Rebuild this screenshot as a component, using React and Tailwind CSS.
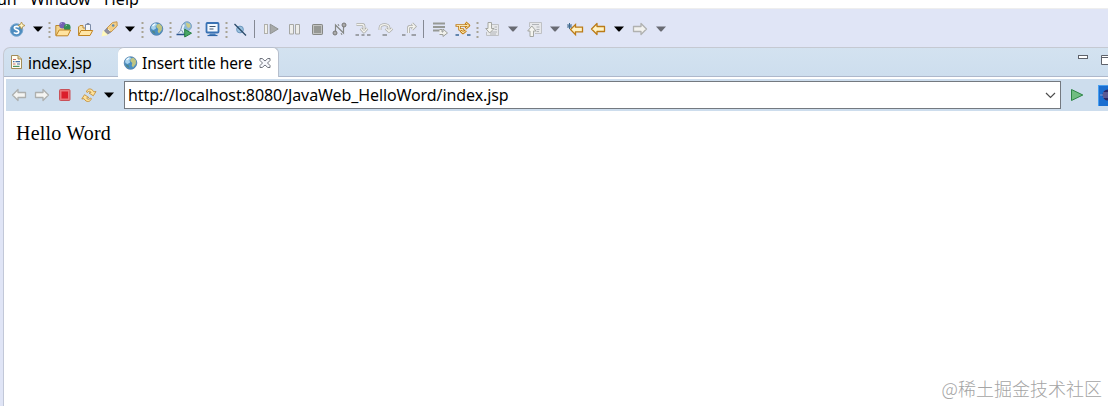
import React from 'react';
import clsx from 'clsx';

const Icon = ({ className, children }) => (
  <svg viewBox="0 0 16 16" className={clsx('h-4 w-4 shrink-0 overflow-visible', className)} fill="none">
    {children}
  </svg>
);

const Caret = ({ className, color = '#000' }) => (
  <svg viewBox="0 0 10 6" className={clsx('h-[6px] w-[10px] shrink-0', className)}>
    <path d="M0 0.5H10L5.5 5.5H4.5Z" fill={color} />
  </svg>
);

const Dots = ({ className }) => (
  <svg viewBox="0 0 3 17" className={clsx('h-[17px] w-[3px] shrink-0', className)}>
    {[1, 6, 10, 15].map(y => (
      <rect key={y} x="0.5" y={y} width="2" height="2" fill="#a8a394" />
    ))}
  </svg>
);

const Divider = ({ className }) => (
  <div className={clsx('h-[18px] w-px shrink-0 bg-[#858994]', className)} />
);

const LeftArrow = ({ stroke, fill }) => (
  <path d="M1.5 8L7 2.5V5.5H14.5V10.5H7V13.5Z" stroke={stroke} fill={fill} strokeWidth="1.3" strokeLinejoin="round" />
);

const RightArrow = ({ stroke, fill }) => (
  <path d="M14.5 8L9 2.5V5.5H1.5V10.5H9V13.5Z" stroke={stroke} fill={fill} strokeWidth="1.3" strokeLinejoin="round" />
);

const Globe = () => (
  <>
    <circle cx="7.5" cy="8" r="6.3" fill="#4a8fc4" stroke="#5580a8" strokeWidth="0.8" />
    <path d="M2 6L4 3L7 2L8.5 4L6.5 5L7 7.5L4.5 9L2.5 8Z" fill="#a9d3ee" />
    <path d="M8 3.5L10.5 2.8L13 5.5L12.8 9L10 12.5L8.7 10.5L9.3 8L7.2 6Z" fill="#c0c583" />
    <path d="M2.5 9.5L5.5 10L6.5 13L4 12Z" fill="#4f868a" />
    <path d="M3.5 5L6 3" stroke="#f2fbff" strokeWidth="1.4" />
  </>
);

const Toolbar = () => (
  <div className="flex h-[38px] items-center bg-[#e0e5f6] pt-[2px]">
    <Icon className="ml-[9px]">
      <circle cx="7.5" cy="9" r="6.3" fill="#4d8cc0" stroke="#7ba9d0" />
      <path d="M10 6.2C8.7 5 5.2 5.1 5.3 7C5.4 9 9.8 8.3 9.8 10.7C9.8 12.7 6.2 12.9 4.8 11.5" stroke="#fff" strokeWidth="1.7" />
      <path d="M12.5 1L13.7 3.5L16 4.5L13.7 5.6L12.5 8.2L11.3 5.6L9 4.5L11.3 3.5Z" fill="#fff4c4" stroke="#ae8b3c" strokeWidth="0.8" />
    </Icon>
    <Caret className="ml-[8px]" />
    <Dots className="ml-[5px]" />
    <Icon className="ml-[4px]">
      <path d="M0.8 14.5V4.5H5L6 6H13V9" fill="#f4d48c" stroke="#b98830" />
      <circle cx="7.5" cy="4.2" r="3.2" fill="#7460b4" />
      <circle cx="12.2" cy="6.4" r="3.4" fill="#348b56" />
      <path d="M5.5 3L7 2" stroke="#b0a4dd" />
      <path d="M10.5 5L12 4.2" stroke="#8bd09b" />
      <path d="M1 14.8L4.2 9H15.6L12.8 14.8Z" fill="#ffe3a0" stroke="#c28422" />
    </Icon>
    <Icon className="ml-[6px]">
      <path d="M1.5 14V6L3 4.5H6V7H13V9" fill="#f8dfa0" stroke="#bd8b35" />
      <path d="M8.5 3.5H13.5V9.5H8.5Z" fill="#f4f7fc" stroke="#7d8ca7" />
      <path d="M10 3.5V2.5H12V3.5" stroke="#7d8ca7" />
      <path d="M1.5 14.5L4 9.5H15.7L13 14.5Z" fill="#ffe6a8" stroke="#c28422" />
    </Icon>
    <Icon className="ml-[8px]">
      <path d="M0.5 15.5L2 9L7.5 14Z" fill="#fff8bc" />
      <path d="M3.5 10L6 7L10 11L6.8 13Z" fill="#8f8f9a" stroke="#777783" strokeWidth="0.7" />
      <path d="M6 7L11.5 1.5L16 0.8L16.2 5L10 11Z" fill="#f3ce86" stroke="#c59853" />
      <circle cx="12.2" cy="4.5" r="1.3" fill="#5d8cb5" />
      <path d="M7 8L9.2 10" stroke="#fff1c2" />
    </Icon>
    <Caret className="ml-[8px]" />
    <Dots className="ml-[6px]" />
    <Icon className="ml-[5px]"><Globe /></Icon>
    <Dots className="ml-[4px]" />
    <Icon className="ml-[4px]">
      <circle cx="11" cy="5.2" r="4.5" fill="#8db9d9" stroke="#7098bd" strokeWidth="0.8" />
      <path d="M10 1.5L14 3L14.5 6L12 7L10.5 5Z" fill="#cacc88" />
      <path d="M3.5 13L5.5 8L6 4C6.5 2.8 8 2.5 9 3.5L7.5 7.5L9 12.5H5Z" fill="#e6f3fc" />
      <path d="M2 12.5L4.5 9.5L6 4.5C6.5 3 7.5 2.5 8.5 3M5.5 9L7.5 12.5" stroke="#7894b5" />
      <path d="M0.5 13.5H9" stroke="#2b548f" strokeWidth="1.5" />
      <path d="M8.7 8.3L15.5 12.2L8.7 16Z" fill="#48a666" stroke="#247e42" />
    </Icon>
    <Dots className="ml-[5px]" />
    <Icon className="ml-[5px]">
      <rect x="1.5" y="2" width="12" height="9.5" rx="0.8" fill="#f3f8fe" stroke="#3a72b4" strokeWidth="1.8" />
      <path d="M4.5 5.5H10.5M4.5 8H8.5" stroke="#40556f" strokeWidth="1.1" />
      <path d="M5 12.5H10L11.5 15H3.5Z" fill="#4c82bd" />
      <path d="M2.5 14.5H12.5" stroke="#2e65a7" strokeWidth="1.2" />
    </Icon>
    <Dots className="ml-[4px]" />
    <Icon className="ml-[5px]">
      <circle cx="7" cy="8.5" r="3.4" fill="#9ac1df" stroke="#6c97bd" />
      <path d="M1.5 3L13 14.5" stroke="#294867" strokeWidth="1.3" />
    </Icon>
    <Divider className="ml-[5px]" />

    <Icon className="ml-[8px]">
      <rect x="1.5" y="3.5" width="3" height="9" fill="#f0f0eb" stroke="#b0b0ac" />
      <path d="M7.2 3.2V12.8L15.2 8Z" fill="#a7a9a9" stroke="#8f9290" />
    </Icon>
    <Icon className="ml-[8px]">
      <path d="M2.5 3.5H6.5V13H2.5ZM8.5 3.5H12.5V13H8.5Z" fill="#ededeb" stroke="#a6a7a4" />
    </Icon>
    <Icon className="ml-[7px]">
      <rect x="2.5" y="3.5" width="10" height="10" rx="0.7" fill="#c2c3c1" stroke="#858784" />
      <rect x="4" y="5" width="7" height="7" fill="#969894" />
    </Icon>
    <Icon className="ml-[6px]">
      <path d="M3.5 12V4L11.5 12V4" stroke="#858885" strokeWidth="1.2" />
      <circle cx="3" cy="12" r="2" fill="#aaa" stroke="#777" />
      <circle cx="12" cy="4" r="2" fill="#aaa" stroke="#777" />
      <path d="M6 3L7 5M9 12L10 14" stroke="#858885" />
    </Icon>
    <Icon className="ml-[7px]">
      <path d="M1.5 3.5H7Q9 3.5 9 5.5V9M5.8 7.5L9 11L12.2 7.5" stroke="#a9aaa6" strokeWidth="2.8" strokeLinejoin="round" />
      <path d="M1.5 3.5H7Q9 3.5 9 5.5V9M5.8 7.5L9 11L12.2 7.5" stroke="#f3f3ef" strokeWidth="1.3" />
      <path d="M0.5 14H4M6.5 14H9.5M12 14H15.5" stroke="#888b8e" strokeWidth="1.5" />
    </Icon>
    <Icon className="ml-[7px]">
      <path d="M2 9V7C2 2.5 11 2.5 11 7V9M7.8 7.5L11 10.5L14.2 7.5" stroke="#a9aaa6" strokeWidth="2.8" strokeLinejoin="round" />
      <path d="M2 9V7C2 2.5 11 2.5 11 7V9M7.8 7.5L11 10.5L14.2 7.5" stroke="#f3f3ef" strokeWidth="1.3" />
      <path d="M4.5 14H9" stroke="#888b8e" strokeWidth="1.5" />
    </Icon>
    <Icon className="ml-[7px]">
      <path d="M7.5 12V7Q7.5 5.5 9 5.5H13M11 2.5L14 5.5L11 8.5" stroke="#a9aaa6" strokeWidth="2.8" />
      <path d="M7.5 12V7Q7.5 5.5 9 5.5H13M11 2.5L14 5.5L11 8.5" stroke="#f3f3ef" strokeWidth="1.3" />
      <path d="M1 14H4.5M10.5 14H15" stroke="#888b8e" strokeWidth="1.5" />
    </Icon>
    <Divider className="ml-[6px]" />
    <Icon className="ml-[8px]">
      <path d="M1 2.5H13M1 6H13M1 9.5H8" stroke="#969995" strokeWidth="1.8" />
      <path d="M7.5 8.5H10V11H11V8L15.5 12L11 15.5V13.5H7.5" fill="#f1f1ec" stroke="#9c9e99" />
    </Icon>
    <Icon className="ml-[7px]">
      <path d="M0.5 4.5H13M10.5 1.5L14 4.5L10.5 7.5M4.5 5V8.5H8V11M5.5 9.5L8 12L11 9.5" stroke="#c17c16" strokeWidth="2.6" strokeLinejoin="round" />
      <path d="M1.5 4.5H13M10.5 1.5L14 4.5L10.5 7.5M4.5 5V8.5H8V11M5.5 9.5L8 12L11 9.5" stroke="#fff0bb" strokeWidth="0.9" />
      <path d="M0.5 14H4M12 14H15.5" stroke="#386596" strokeWidth="1.6" />
    </Icon>
    <Dots className="ml-[5px]" />
    <Icon className="ml-[6px]">
      <path d="M6.5 3.5H13.5V14.5H1.5V11" fill="#e7e8ea" stroke="#bfc1c5" />
      <path d="M9.5 6H12M9.5 8.5H12M5.5 11H12M5 13H11" stroke="#b1b4b8" />
      <path d="M3 1.5H6.5V7.5H9L4.7 12L0.7 7.5H3Z" fill="#f4f4ef" stroke="#a4a6a2" />
    </Icon>
    <Caret className="ml-[7px]" color="#696b73" />
    <Icon className="ml-[9px]">
      <path d="M2.5 6V1.5H14.5V12.5H8" fill="#e7e8ea" stroke="#bfc1c5" />
      <path d="M5 3.5H12M9.5 6H12.5M9.5 8.5H12.5M9.5 10.5H12" stroke="#b1b4b8" />
      <path d="M3 15.5V10H0.7L4.8 5L9 10H6.5V15.5Z" fill="#f4f4ef" stroke="#a4a6a2" />
    </Icon>
    <Caret className="ml-[7px]" color="#696b73" />
    <Icon className="ml-[7px]">
      <path d="M3.5 8.5L8.5 3.5V6.2H15.5V10.8H8.5V13.7Z" fill="#fff3c5" stroke="#bb7b16" strokeWidth="1.3" />
      <path d="M2.5 2V8M0 5H5M0.5 3L4.5 7M4.5 3L0.5 7" stroke="#416b8f" />
    </Icon>
    <Icon className="ml-[7px]"><LeftArrow stroke="#bb7b16" fill="#fff3c5" /></Icon>
    <Caret className="ml-[8px]" />
    <Icon className="ml-[8px]"><RightArrow stroke="#b0b1b0" fill="#f2f2ef" /></Icon>
    <Caret className="ml-[8px]" color="#696b73" />
  </div>
);

const Tabs = () => (
  <div className="flex h-[30px] rounded-tl-[7px] border-t border-l border-[#c5c9d2] bg-linear-to-b from-[#d3e2f0] to-[#cddeee]">
    <div className="flex w-[114px] items-center border-b border-[#aeb8cb] pl-[5px]">
      <Icon>
        <path d="M2.5 1.5H9L12.5 5V14.5H2.5Z" fill="#fffdf2" stroke="#a28d58" />
        <path d="M9 1.5V5H12.5" fill="#ebd69d" stroke="#a28d58" />
        <path d="M4 5.5H7M4 10H6.5" stroke="#c96c65" strokeWidth="1.2" />
        <path d="M4 7.7H5.5M6.5 7.7H11M8 10H11" stroke="#426da6" strokeWidth="1.2" />
        <path d="M4 12.4H10.5" stroke="#499365" strokeWidth="1.2" />
      </Icon>
      <span className="ml-[3px] pt-[3px] text-[15.5px] tracking-[-0.12px]">index.jsp</span>
    </div>
    <div className="-mt-px flex w-[161px] items-center rounded-t-[6px] border-t border-r border-[#b7bfcd] bg-white pt-[1px] pl-[5px]">
      <Icon><Globe /></Icon>
      <span className="ml-[3px] w-[112px] pt-[2px] text-[15.5px] tracking-[-0.1px] whitespace-nowrap">Insert title here</span>
      <svg viewBox="0 0 12 12" className="ml-[5px] h-3 w-3 shrink-0" fill="#f7f8fc" stroke="#70747e">
        <path d="M1 1.5H3.2L6 4L8.8 1.5H11V3.5L8.5 6L11 8.5V10.5H8.8L6 8L3.2 10.5H1V8.5L3.5 6L1 3.5Z" />
      </svg>
    </div>
    <div className="flex flex-1 justify-end border-b border-[#aeb8cb] pt-[6px]">
      <svg viewBox="0 0 30 12" className="h-3 w-[30px]" fill="#fff" stroke="#5e626b">
        <rect x="0.5" y="1.5" width="9" height="3" />
        <path d="M31 1.5H23.5V10.5H31M23.5 3.5H31" />
      </svg>
    </div>
  </div>
);

const AddressBar = () => (
  <div className="ml-[2px] flex h-[32px] items-center bg-[#cddded]">
    <Icon className="ml-[5px]"><LeftArrow stroke="#adafae" fill="#f4f4f2" /></Icon>
    <Icon className="ml-[7px]"><RightArrow stroke="#adafae" fill="#f4f4f2" /></Icon>
    <Icon className="ml-[7px]">
      <rect x="2.5" y="2.5" width="10.5" height="11" rx="1" fill="#e9777b" stroke="#c95158" />
      <rect x="4.5" y="4.5" width="6.5" height="7" fill="#db1e2b" />
    </Icon>
    <Icon className="ml-[8px]">
      <path d="M5.5 5C6 1.5 10.5 0.5 12.8 4.8L15 4.5L12.3 8.8L8 6L10.2 5.4C9 3.8 7.3 3.8 6.5 5.5Z" fill="#ffe39a" stroke="#c4913c" strokeWidth="0.9" />
      <path d="M10.3 11.5C9.8 15 5.3 16 3 11.7L0.8 12L3.5 7.7L7.8 10.5L5.6 11.1C6.8 12.7 8.5 12.7 9.3 11Z" fill="#ffe39a" stroke="#c4913c" strokeWidth="0.9" />
    </Icon>
    <Caret className="ml-[7px]" />
    <div className="ml-[10px] flex h-[28px] w-[937px] items-center border border-[#747980] bg-white pr-[4px] pl-[3px]">
      <span className="flex-1 text-[16px] tracking-[-0.09px]">http://localhost:8080/JavaWeb_HelloWord/index.jsp</span>
      <svg viewBox="0 0 11 7" className="h-[7px] w-[11px]" fill="none" stroke="#4d4d4d" strokeWidth="1.2">
        <path d="M1 1L5.5 5.5L10 1" />
      </svg>
    </div>
    <Icon className="ml-[8px]">
      <path d="M2.5 2.5L13.8 8L2.5 13.5Z" fill="#6fbd80" stroke="#2c8545" />
    </Icon>
    <svg viewBox="0 0 10 21" className="ml-[13px] h-[21px] w-[10px] shrink-0">
      <rect width="10" height="21" fill="#1b6ed0" />
      <path d="M0 0.5H10M0.5 0V21" stroke="#489ff0" />
      <circle cx="10" cy="10" r="5.5" fill="#292766" />
      <path d="M2 10H10M5 8H10M5 12H10" stroke="#a6a4d7" strokeWidth="0.8" />
    </svg>
  </div>
);

const App = () => (
  <div className="flex h-[406px] w-[1108px] flex-col overflow-hidden bg-[#e0e5f6] font-['Noto_Sans','Noto_Sans_CJK_SC',sans-serif] text-black">
    <div className="flex h-[9px] shrink-0 items-end overflow-hidden border-b border-[#eeeeee] bg-white text-[16px] leading-[20px]">
      <div className="-mb-px flex">
        <span className="-ml-[13px] w-[43px]">Run</span>
        <span className="w-[74px]">Window</span>
        <span>Help</span>
      </div>
    </div>
    <Toolbar />
    <div className="ml-[3px] flex flex-1 flex-col">
      <Tabs />
      <div className="flex flex-1 flex-col border-l border-[#c2c8d8] bg-white pt-[2px]">
        <AddressBar />
        <main className="flex flex-1 flex-col justify-between">
          <p className="pt-[9px] pl-[12px] font-['Liberation_Serif',serif] text-[20px] leading-[26px] tracking-[0.2px]">Hello Word</p>
          <p className="mr-[6px] mb-[5px] self-end font-['Noto_Sans_CJK_SC',sans-serif] text-[18px] leading-[26px] font-light text-[#a4a4a4]">
            @稀土掘金技术社区
          </p>
        </main>
      </div>
    </div>
  </div>
);

export default App;
